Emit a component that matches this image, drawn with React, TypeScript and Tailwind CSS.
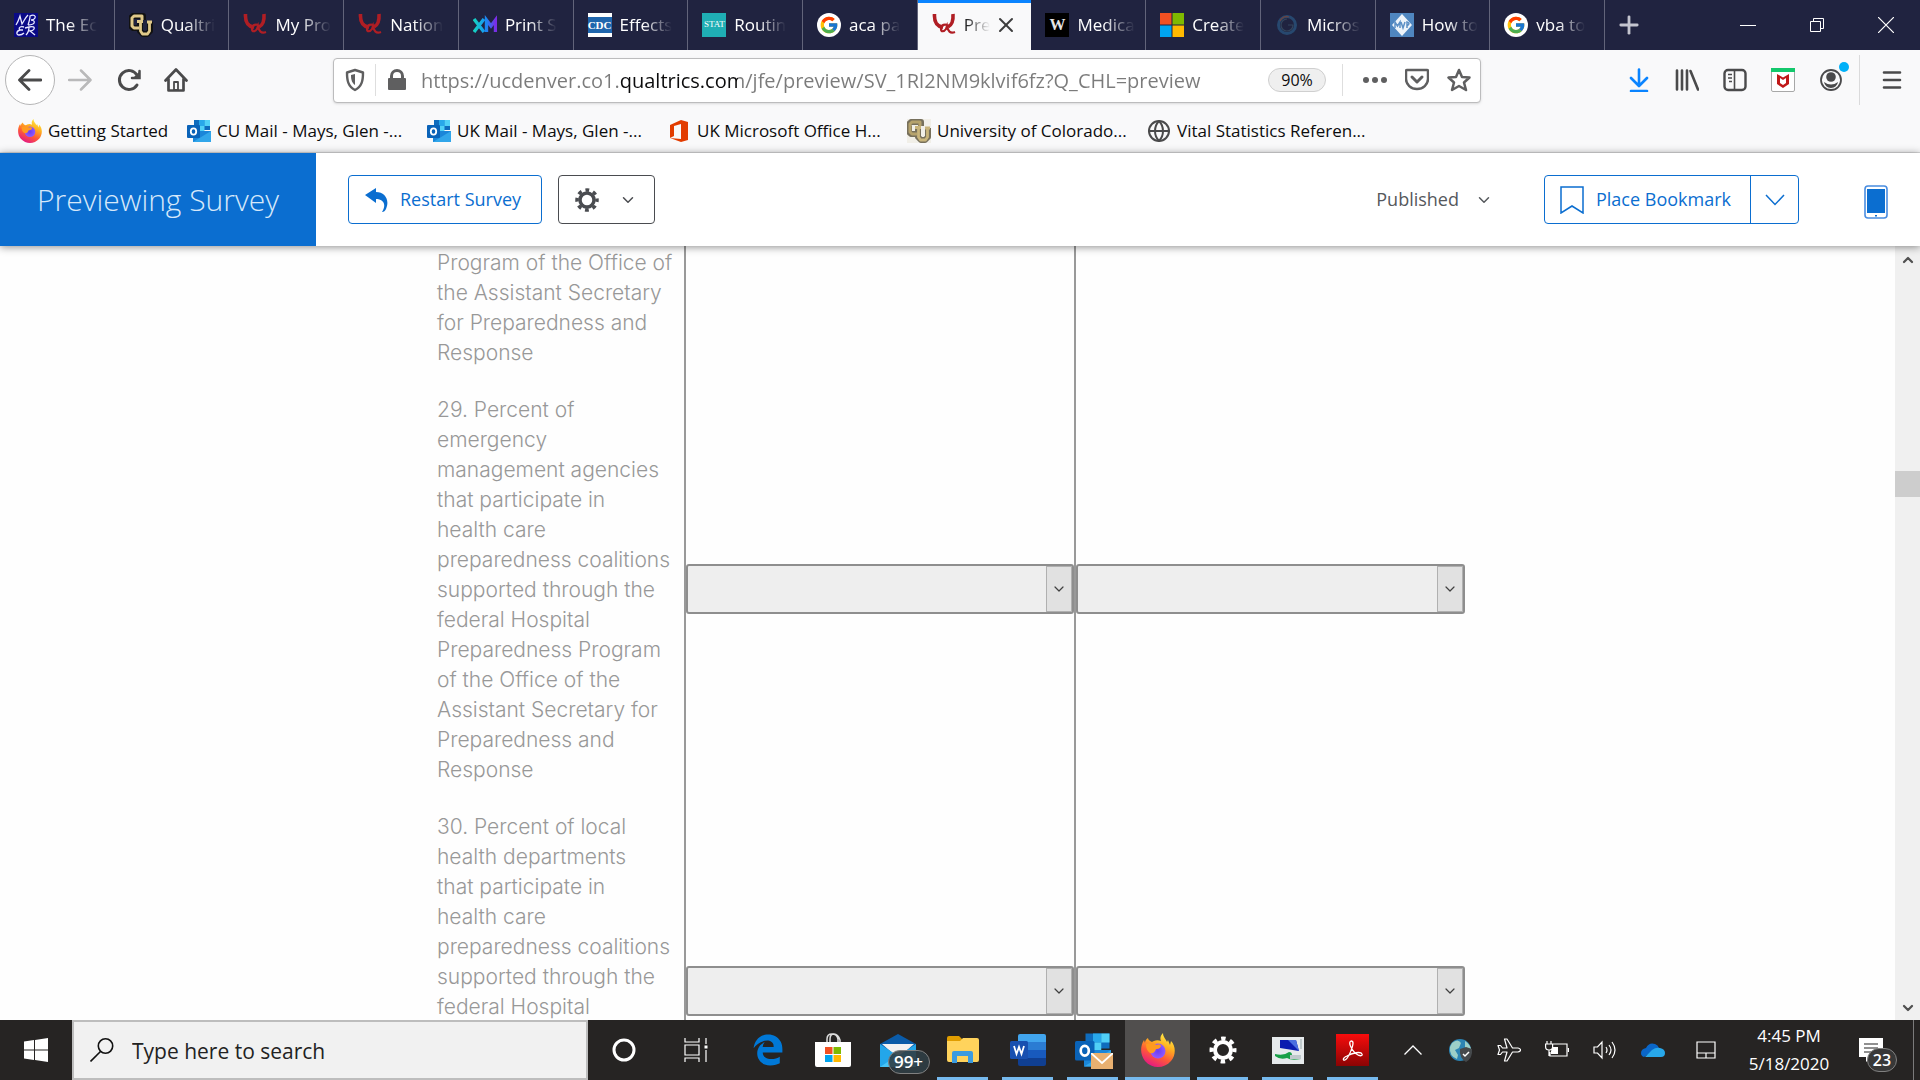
import type { ReactNode } from 'react'
import { ChevronDown, ChevronUp, Globe, Plus, X } from 'lucide-react'
import { FcGoogle } from 'react-icons/fc'
import { FaEdgeLegacy } from 'react-icons/fa6'

interface Tab {
    title: string
    icon: ReactNode
    active?: boolean
}

interface SurveyRow {
    id: number
    lines: string[]
}

/* ---------- Site icons ---------- */

function NberIcon() {
    return (
        <svg viewBox="0 0 24 24" className="size-6" fill="none" stroke="#e8e8ff" strokeWidth="1.3">
            <rect width="24" height="24" fill="#0a0a86" stroke="none" />
            <path d="M2 12C4 9 5 6 6 3l2 8c2-3 3-6 6-9M14 12c1-3 2-6 2-9 4-2 6 0 5 2s-3 2-4 2c4 0 4 3 2 4s-4 1-5 1" />
            <path d="M10 14c-4-1-6 1-4 3-4 1-4 5-1 5s4-1 5-2M6 17h3M12 22c2-2 3-5 3-8 4-1 6 0 5 2s-3 2-4 2l5 4M11 15l4-1" />
        </svg>
    )
}

function CuIcon({ muted = false }: { muted?: boolean }) {
    return (
        <svg viewBox="0 0 24 24" className="size-6 shrink-0" fill="none" strokeLinejoin="round">
            {muted && <rect width="24" height="24" fill="#f1efe8" />}
            <path d="M14 7V3H4L2 5v8l2 2h6M11 9v9l3 3h4l3-3V9" stroke={muted ? '#77705c' : '#111'} strokeWidth="6" />
            <path d="M13 7V3H5L3 5v8l2 2h5" stroke={muted ? '#b5a26c' : '#e0c98a'} strokeWidth="3" />
            <path d="M8 8.500h6M11.500 9v9l2 3h5l2-3V9M18 9h5" stroke={muted ? '#c9b57c' : '#e0c98a'} strokeWidth="2.800" />
        </svg>
    )
}

function QIcon() {
    return (
        <svg viewBox="0 0 24 24" className="size-6" fill="none" stroke="#b01e24">
            <path d="M2.500 1c-.5 8 2 12 8.500 13.500" strokeWidth="3.600" />
            <path d="M21 1c.5 7-1 11-5 13" strokeWidth="3.600" />
            <path d="M17 13c-4-3-8-1-8 3 0 3 3 3 5 0l1-3c1 5 3 8 8 6" strokeWidth="2.200" />
        </svg>
    )
}

function XmIcon() {
    return (
        <svg viewBox="0 0 24 24" className="size-6" fill="none" strokeWidth="3.4">
            <defs>
                <linearGradient id="xm-x" x1="0" x2="1">
                    <stop stopColor="#15d3c0" />
                    <stop offset="1" stopColor="#179cf0" />
                </linearGradient>
                <linearGradient id="xm-m" x1="0" x2="1">
                    <stop stopColor="#1b87f2" />
                    <stop offset="1" stopColor="#7a2ce6" />
                </linearGradient>
            </defs>
            <path d="m1 6 10 13M11 6 1 19" stroke="url(#xm-x)" />
            <path d="M13.500 19V7l4.500 6 4.500-6v12" stroke="url(#xm-m)" />
        </svg>
    )
}

function CdcIcon() {
    return (
        <span className="flex size-6 items-center bg-white">
            <span className="flex h-4 w-6 items-center justify-center bg-[#1f66ad] font-['Liberation_Serif',serif] text-[11px] font-bold text-white">
                CDC
            </span>
        </span>
    )
}

function StatIcon() {
    return (
        <span className="flex size-6 items-center justify-center bg-[#1faeb4] font-['Liberation_Serif',serif] text-[9px] text-white">
            STAT
        </span>
    )
}

function GoogleIcon() {
    return (
        <span className="flex size-6 items-center justify-center rounded-full bg-white">
            <FcGoogle className="size-5" />
        </span>
    )
}

function WikiIcon() {
    return (
        <span className="flex size-6 items-center justify-center bg-black font-['Liberation_Serif',serif] text-base font-bold text-[#e5e5e5]">
            W
        </span>
    )
}

function MicrosoftIcon() {
    return (
        <svg viewBox="0 0 24 24" className="size-6">
            <path d="M0 0h11.500v11.500H0z" fill="#f25022" />
            <path d="M12.500 0H24v11.500H12.500z" fill="#7fba00" />
            <path d="M0 12.500h11.500V24H0z" fill="#00a4ef" />
            <path d="M12.500 12.500H24V24H12.500z" fill="#ffb900" />
        </svg>
    )
}

function RingIcon() {
    return (
        <svg viewBox="0 0 24 24" className="size-6" fill="none">
            <circle cx="12" cy="12" r="8.500" stroke="#27486f" strokeWidth="3" />
            <path d="M12 6a6 6 0 1 0 6 6h-5" stroke="#33455c" strokeWidth="1.200" />
            <path d="M5 8a8 8 0 0 1 9-4" stroke="#6d4440" strokeWidth="1.200" />
        </svg>
    )
}

function MvpIcon() {
    return (
        <svg viewBox="0 0 24 24" className="size-6">
            <rect width="24" height="24" fill="#4f86c0" />
            <path d="m12 1 10 11-10 11L2 12z" fill="#eef4fa" />
            <path d="M5 15V9l2.500 4L10 9v6M11 9l2 6 2-6M17 15V9q4 1 0 4" fill="none" stroke="#5c8fc5" strokeWidth="1.500" />
        </svg>
    )
}

function FirefoxIcon({ className }: { className: string }) {
    return (
        <svg viewBox="0 0 34 34" className={className}>
            <defs>
                <linearGradient id="fx-body" x1="0.800" y1="0" x2="0.300" y2="1">
                    <stop stopColor="#fff44f" />
                    <stop offset="0.350" stopColor="#ffb01f" />
                    <stop offset="0.650" stopColor="#ff5b36" />
                    <stop offset="1" stopColor="#e31587" />
                </linearGradient>
                <radialGradient id="fx-globe">
                    <stop stopColor="#6b3df0" />
                    <stop offset="1" stopColor="#9059ff" />
                </radialGradient>
            </defs>
            <path
                d="M22 0c-3 3-3 6-2 8-4-2-8 0-9 1C8 8 7 6 7 5 5 6 4 8 4 10L3 7c-4 6-4 15 1 21 7 8 19 8 26 0 5-6 5-15 0-20l-1 4-2-5-1 2c-1-3-4-5-4-9Z"
                fill="url(#fx-body)"
            />
            <circle cx="17" cy="18" r="7.500" fill="url(#fx-globe)" />
            <path d="M5 11c5-1 9 0 11 1 2-1 4 0 4 1-1 3-4 3-5 3-1 3-3 5-6 4-3-2-4-5-4-9Z" fill="#ff9a20" />
        </svg>
    )
}

function OutlookIcon({ className }: { className: string }) {
    return (
        <svg viewBox="0 0 24 24" className={className}>
            <path d="M7 1h16v10H7z" fill="#0f6cbd" />
            <path d="M12 1h5.500v6H12z" fill="#28a8ea" />
            <path d="M17.500 1H23v6h-5.500zM12 7h5.500v6H12z" fill="#50d0f7" />
            <path d="M6 12h18v11H6z" fill="#1a86d9" />
            <path d="m6 23 18-11v11z" fill="#31a6ea" />
            <rect y="6" width="13" height="13" rx="1" fill="#0a63b8" />
            <ellipse cx="6.500" cy="12.500" rx="2.700" ry="3.200" fill="none" stroke="#fff" strokeWidth="1.800" />
        </svg>
    )
}

function OfficeIcon() {
    return (
        <svg viewBox="0 0 24 24" className="size-6 shrink-0">
            <path d="m3 6 11-5 7 2v18l-7 2-11-4 11 1V5L7 7v10l-4 2z" fill="#e23c00" />
        </svg>
    )
}

/* ---------- Browser chrome ---------- */

const TABS: Tab[] = [
    { title: 'The Ec', icon: <NberIcon /> },
    { title: 'Qualtri', icon: <CuIcon /> },
    { title: 'My Pro', icon: <QIcon /> },
    { title: 'Nation', icon: <QIcon /> },
    { title: 'Print S', icon: <XmIcon /> },
    { title: 'Effects', icon: <CdcIcon /> },
    { title: 'Routin', icon: <StatIcon /> },
    { title: 'aca pa', icon: <GoogleIcon /> },
    { title: 'Pre', icon: <QIcon />, active: true },
    { title: 'Medica', icon: <WikiIcon /> },
    { title: 'Create', icon: <MicrosoftIcon /> },
    { title: 'Micros', icon: <RingIcon /> },
    { title: 'How to', icon: <MvpIcon /> },
    { title: 'vba to', icon: <GoogleIcon /> },
]

function TabStrip() {
    return (
        <div className="flex h-[50px] shrink-0 bg-[#202340] text-white">
            <div role="tablist" className="flex min-w-0 flex-[0_1_1605px]">
                {TABS.map((tab) => (
                    <button
                        key={tab.title}
                        role="tab"
                        aria-selected={!!tab.active}
                        className={`flex min-w-0 flex-1 items-center gap-2 pl-3.5 ${
                            tab.active
                                ? 'border-t-[3px] border-[#0a84ff] bg-[#f9f9fa] pb-[3px] text-[#0c0c0d]'
                                : 'border-r border-[#62647a]'
                        }`}
                    >
                        <span className="shrink-0">{tab.icon}</span>
                        <span
                            className={`text-left text-[17px] whitespace-nowrap ${
                                tab.active
                                    ? '[mask-image:linear-gradient(to_right,black,transparent)]'
                                    : '[mask-image:linear-gradient(to_right,black_45%,transparent)]'
                            }`}
                        >
                            {tab.title}
                        </span>
                        {tab.active && <X className="-ml-1 size-6 shrink-0 text-[#3d3d3d]" strokeWidth={2} />}
                    </button>
                ))}
            </div>
            <button aria-label="New tab" className="flex w-12 items-center justify-center text-[#c4c5cf]">
                <Plus className="size-7" strokeWidth={2.4} />
            </button>
            <div className="ml-auto flex">
                <button aria-label="Minimize" className="flex w-[69px] items-center justify-center">
                    <span className="h-px w-4 bg-white" />
                </button>
                <button aria-label="Restore" className="flex w-[69px] items-center justify-center">
                    <svg viewBox="0 0 16 16" className="size-4" fill="none" stroke="#fff">
                        <path d="M1.500 4.500h10v10h-10zM4.500 4.500v-3h10v10h-3" />
                    </svg>
                </button>
                <button aria-label="Close window" className="flex w-[69px] items-center justify-center">
                    <svg viewBox="0 0 16 16" className="size-4" stroke="#fff" strokeWidth="1.200">
                        <path d="m0 0 16 16M16 0 0 16" />
                    </svg>
                </button>
            </div>
        </div>
    )
}

function Toolbar() {
    return (
        <div className="flex h-[60px] shrink-0 items-center text-[#4a4a4b]">
            <div className="flex w-[333px] shrink-0 items-center pl-[5px]">
                <button aria-label="Back" className="flex size-[50px] items-center justify-center rounded-full border border-[#b5b5b6] bg-white">
                    <svg viewBox="0 0 24 24" className="size-6" fill="none" stroke="currentColor" strokeWidth="2.800" strokeLinecap="round" strokeLinejoin="round">
                        <path d="M23 12H2M11 2.500 1.500 12l9.500 9.500" />
                    </svg>
                </button>
                <button aria-label="Forward" className="flex w-[50px] justify-center text-[#b9b9ba]">
                    <svg viewBox="0 0 24 24" className="size-6" fill="none" stroke="currentColor" strokeWidth="2.500" strokeLinecap="round" strokeLinejoin="round">
                        <path d="M1 12h21M13 2.500l9.500 9.500-9.500 9.500" />
                    </svg>
                </button>
                <button aria-label="Reload" className="flex w-12 justify-center">
                    <svg viewBox="0 0 24 24" className="size-6" fill="none" stroke="currentColor" strokeWidth="3" strokeLinecap="round">
                        <path d="M20 17A9.500 9.500 0 1 1 20 7" />
                        <path d="M22.500 3v7H15" strokeWidth="2.500" />
                        <path d="M22 4v6h-6z" fill="currentColor" stroke="none" />
                    </svg>
                </button>
                <button aria-label="Home" className="flex w-[46px] justify-center">
                    <svg viewBox="0 0 24 24" className="size-6" fill="none" stroke="currentColor" strokeWidth="2.700" strokeLinecap="round" strokeLinejoin="round">
                        <path d="m1.500 12.500 10.500-11 10.500 11M4.500 11v11.500h15V11" />
                        <path d="M10 14h4v8h-4z" strokeWidth="1.800" />
                    </svg>
                </button>
            </div>

            {/* Address bar */}
            <div className="flex h-[45px] min-w-0 flex-1 items-center rounded-sm border border-[#bcbcbd] bg-white shadow-sm">
                <svg viewBox="0 0 20 24" className="ml-[11px] h-6 w-5 shrink-0" fill="none" stroke="#5f5f60" strokeWidth="2.400">
                    <path d="M10 2 18 4.500c0 8-1 14-8 17.500C3 18.500 2 12.500 2 4.500z" strokeLinejoin="round" />
                    <path d="M10 6v11c-3-2-4-5-4-10z" fill="#5f5f60" stroke="none" />
                </svg>
                <span className="ml-2.5 h-8 w-px shrink-0 bg-[#dedede]" />
                <svg viewBox="0 0 20 22" className="ml-[11px] h-[22px] w-5 shrink-0" fill="#5f5f60">
                    <path d="M3 9V7a7 7 0 0 1 14 0v2h1q1 0 1 1v10q0 1-1 1H2q-1 0-1-1V10q0-1 1-1zm3 0h8V7a4 4 0 0 0-8 0z" />
                </svg>
                <input
                    aria-label="Address"
                    defaultValue="https://ucdenver.co1.qualtrics.com/jfe/preview/SV_1Rl2NM9klvif6fz?Q_CHL=preview"
                    className="ml-3.5 h-10 min-w-0 flex-1 bg-[linear-gradient(to_right,#7b7b7b_198px,#0c0c0d_198px,#0c0c0d_317px,#7b7b7b_317px)] bg-clip-text text-[20px] text-[#7b7b7b] outline-none [-webkit-text-fill-color:transparent]"
                />
                <button className="h-6 w-[58px] shrink-0 rounded-full border border-[#cfcfcf] bg-[#efefef] text-[16px] leading-5 text-[#0c0c0d]">
                    90%
                </button>
                <span className="ml-4 h-8 w-px shrink-0 bg-[#dedede]" />
                <button aria-label="Page actions" className="ml-5 shrink-0">
                    <svg viewBox="0 0 24 24" className="size-6" fill="#5f5f60">
                        <circle cx="3" cy="12" r="3" />
                        <circle cx="12" cy="12" r="3" />
                        <circle cx="21" cy="12" r="3" />
                    </svg>
                </button>
                <button aria-label="Save to Pocket" className="ml-[18px] shrink-0">
                    <svg viewBox="0 0 24 24" className="size-6" fill="none" stroke="#5f5f60" strokeWidth="2.500" strokeLinecap="round" strokeLinejoin="round">
                        <path d="M2 2h20q1 0 1 1v8a11 10 0 0 1-22 0V3q0-1 1-1z" />
                        <path d="m7 9 5 5 5-5" strokeWidth="3" />
                    </svg>
                </button>
                <button aria-label="Bookmark this page" className="mr-[9px] ml-[18px] shrink-0">
                    <svg viewBox="0 0 24 24" className="size-6" fill="none" stroke="#5f5f60" strokeWidth="2.500" strokeLinejoin="round">
                        <path d="m12 2 3 7 7.500.500-5.500 5 2 7.500-7-4-7 4 2-7.500-5.500-5L9 9z" />
                    </svg>
                </button>
            </div>

            {/* Extensions */}
            <div className="flex w-[439px] shrink-0 items-center justify-end">
                <button aria-label="Downloads" className="flex w-12 justify-center text-[#0a84ff]">
                    <svg viewBox="0 0 24 24" className="size-6" fill="none" stroke="currentColor" strokeWidth="2.600" strokeLinecap="round" strokeLinejoin="round">
                        <path d="M12 1.500V17M4 10l8 8 8-8M4 23h16" />
                    </svg>
                </button>
                <button aria-label="Library" className="flex w-12 justify-center">
                    <svg viewBox="0 0 24 24" className="size-6" fill="none" stroke="currentColor" strokeWidth="2.600" strokeLinecap="round">
                        <path d="M2 2.500v19M7 2.500v19M12 2.500v19M15.500 3 23 21.500" />
                    </svg>
                </button>
                <button aria-label="Sidebars" className="flex w-12 justify-center">
                    <svg viewBox="0 0 24 24" className="size-6" fill="none" stroke="currentColor" strokeWidth="2.400">
                        <rect x="1.500" y="2" width="21" height="20" rx="3.500" />
                        <path d="M11.500 2v20M5 6.500h4M5 10h4M6 13.500h3" strokeWidth="1.600" />
                    </svg>
                </button>
                <button aria-label="McAfee" className="flex w-12 justify-center">
                    <svg viewBox="0 0 24 24" className="size-6">
                        <rect x="0.500" y="0.500" width="23" height="23" rx="1.500" fill="#fff" stroke="#a8a8a8" />
                        <path d="M0 0h24v4H0z" fill="#14c86c" />
                        <path d="m6 6 6 3.500L18 6v10l-6 4-6-4zm3 4v5l3 2 3-2v-5l-3 2z" fill="#c01818" />
                    </svg>
                </button>
                <button aria-label="Firefox account" className="flex w-12 justify-center">
                    <span className="relative">
                        <svg viewBox="0 0 24 24" className="size-6">
                            <circle cx="12" cy="12" r="10" fill="none" stroke="currentColor" strokeWidth="1.800" />
                            <circle cx="12" cy="9" r="4.800" fill="currentColor" />
                            <path d="M5 14q7 5 14 0-1 5.500-7 6-6-.5-7-6z" fill="currentColor" />
                        </svg>
                        <span className="absolute -top-1.5 -right-1.5 size-2.5 rounded-full bg-[#00b0f8]" />
                    </span>
                </button>
                <span className="ml-1 h-[50px] w-px bg-[#dadadb]" />
                <button aria-label="Open menu" className="flex w-[60px] justify-center pl-1">
                    <svg viewBox="0 0 20 20" className="size-5" stroke="currentColor" strokeWidth="2.600" strokeLinecap="round">
                        <path d="M2 2.500h16M2 10h16M2 17.500h16" />
                    </svg>
                </button>
            </div>
        </div>
    )
}

const BOOKMARKS = [
    { label: 'Getting Started', icon: <FirefoxIcon className="size-6 shrink-0" />, width: 'w-[169px]' },
    { label: 'CU Mail - Mays, Glen -...', icon: <OutlookIcon className="size-6 shrink-0" />, width: 'w-[240px]' },
    { label: 'UK Mail - Mays, Glen -...', icon: <OutlookIcon className="size-6 shrink-0" />, width: 'w-[240px]' },
    { label: 'UK Microsoft Office H...', icon: <OfficeIcon />, width: 'w-[240px]' },
    { label: 'University of Colorado...', icon: <CuIcon muted />, width: 'w-[240px]' },
    { label: 'Vital Statistics Referen...', icon: <Globe className="size-6 shrink-0 text-[#4a4a4b]" strokeWidth={2} />, width: 'w-[240px]' },
]

function BookmarksBar() {
    return (
        <nav className="flex h-[43px] shrink-0 items-center border-b border-[#dcdcdd] pl-[18px] text-[17px] text-[#0c0c0d]">
            {BOOKMARKS.map((b) => (
                <a key={b.label} href="#" className={`flex items-center gap-1.5 whitespace-nowrap ${b.width}`}>
                    {b.icon}
                    {b.label}
                </a>
            ))}
        </nav>
    )
}

/* ---------- Survey preview ---------- */

function PreviewHeader() {
    return (
        <header className="relative z-10 flex h-[93px] shrink-0 items-center bg-white text-[18px] shadow-[0_1px_8px_rgba(0,0,0,0.45)]">
            <h1 className="flex h-full w-[316px] items-center justify-center bg-[#0b6ed0] text-[30px] font-light text-[#d6e8fa]">
                Previewing Survey
            </h1>
            <button className="ml-8 flex h-[49px] w-[194px] items-center rounded border border-[#0b6ed0] pl-4 text-[#0b6ed0]">
                <svg viewBox="0 0 24 24" className="mr-[11px] size-6" fill="#0b6ed0">
                    <path d="M0 7 11 0v4c9 0 14 8 10 17-1 2-2 3-4 3 5-8 1-13-6-13v4z" />
                </svg>
                Restart Survey
            </button>
            <button aria-label="Preview options" className="ml-4 flex h-[49px] w-[97px] items-center rounded border border-[#4a4c50] pl-4 text-[#4a4c50]">
                <svg viewBox="0 0 24 24" className="size-6" fill="none" stroke="currentColor">
                    <circle cx="12" cy="12" r="7" strokeWidth="3.500" />
                    <circle cx="12" cy="12" r="10" strokeWidth="3.500" strokeDasharray="3.800 4.054" strokeDashoffset="1.900" />
                </svg>
                <ChevronDown className="ml-5 size-[18px]" strokeWidth={2} />
            </button>

            <button className="ml-auto flex items-center gap-4 text-[#55585c]">
                Published
                <ChevronDown className="size-[18px]" strokeWidth={2} />
            </button>
            <div className="ml-[51px] flex h-[49px] w-[255px] rounded border border-[#0b6ed0] text-[#0b6ed0]">
                <button className="flex flex-1 items-center pl-[15px]">
                    <svg viewBox="0 0 24 28" className="mr-3 h-7 w-6" fill="none" stroke="currentColor" strokeWidth="1.500">
                        <path d="M1 1h22v26l-11-7-11 7z" />
                    </svg>
                    Place Bookmark
                </button>
                <button aria-label="Bookmark options" className="flex w-12 items-center justify-center border-l border-[#0b6ed0]">
                    <svg viewBox="0 0 20 12" className="h-3 w-5" fill="none" stroke="currentColor" strokeWidth="1.500">
                        <path d="m1 1 9 9.500L19 1" />
                    </svg>
                </button>
            </div>
            <button aria-label="Mobile view" className="mr-8 ml-[65px] pt-1">
                <svg viewBox="0 0 24 34" className="h-[34px] w-6">
                    <rect x="1" y="1" width="22" height="32" rx="3" fill="#fff" stroke="#4a8de0" strokeWidth="1.600" />
                    <path d="M3 4h18v24H3z" fill="#0b6ed0" />
                    <path d="M11 30h2v1.500h-2z" fill="#0b6ed0" />
                </svg>
            </button>
        </header>
    )
}

const ROWS: SurveyRow[] = [
    {
        id: 28,
        lines: ['Program of the Office of', 'the Assistant Secretary', 'for Preparedness and', 'Response'],
    },
    {
        id: 29,
        lines: [
            '29. Percent of',
            'emergency',
            'management agencies',
            'that participate in',
            'health care',
            'preparedness coalitions',
            'supported through the',
            'federal Hospital',
            'Preparedness Program',
            'of the Office of the',
            'Assistant Secretary for',
            'Preparedness and',
            'Response',
        ],
    },
    {
        id: 30,
        lines: [
            '30. Percent of local',
            'health departments',
            'that participate in',
            'health care',
            'preparedness coalitions',
            'supported through the',
            'federal Hospital',
            'Preparedness Program',
            'of the Office of the',
            'Assistant Secretary for',
            'Preparedness and',
            'Response',
        ],
    },
]

function AnswerSelect({ label }: { label: string }) {
    return (
        <div className="relative">
            <select
                aria-label={label}
                className="block h-[50px] w-full appearance-none rounded-[3px] border-2 border-[#8e8e8e] bg-[#eeeeee]"
            >
                <option></option>
            </select>
            <span className="pointer-events-none absolute inset-y-0.5 right-0.5 flex w-[26px] items-center justify-center border border-[#b0b0b0] bg-[#e1e1e1] text-[#404040]">
                <ChevronDown className="size-4" strokeWidth={1.8} />
            </span>
        </div>
    )
}

function Survey() {
    return (
        <main className="flex min-h-0 flex-1 overflow-hidden bg-[#fefefe]">
            <div className="min-w-0 flex-1">
                <table className="mx-auto w-full max-w-[1035px] table-fixed border-collapse">
                    <tbody>
                        {ROWS.map((row) => (
                            <tr key={row.id}>
                                <th
                                    scope="row"
                                    className={`w-[255px] pb-[13px] pl-[7px] text-left font-['Inter',sans-serif] text-[21px] leading-[30px] font-light whitespace-nowrap text-[#989898] ${
                                        row.id === 28 ? 'pt-0.5' : 'pt-3.5'
                                    }`}
                                >
                                    {row.lines.map((line) => (
                                        <span key={line} className="block">
                                            {line}
                                        </span>
                                    ))}
                                </th>
                                {['First response', 'Second response'].map((label) => (
                                    <td key={label} className="border-l-2 border-[#999999] pb-0.5 align-middle">
                                        {row.id !== 28 && <AnswerSelect label={`${label}, item ${row.id}`} />}
                                    </td>
                                ))}
                            </tr>
                        ))}
                    </tbody>
                </table>
            </div>

            {/* Scrollbar */}
            <div className="flex w-[25px] shrink-0 flex-col items-center bg-[#f0f0f0] py-1 text-[#505050]">
                <ChevronUp className="mt-0.5 size-4" strokeWidth={3.4} />
                <div className="w-full basis-[203px]" />
                <div className="h-[26px] w-full bg-[#cdcdcd]" />
                <ChevronDown className="mt-auto size-4" strokeWidth={3.4} />
            </div>
        </main>
    )
}

/* ---------- Taskbar ---------- */

function StoreIcon() {
    return (
        <svg viewBox="0 0 36 36" className="size-9">
            <path d="M12 10V7q0-5 5-5t6 5v3M15 10V7q0-5 4-5t6 6v2" fill="none" stroke="#ddd" strokeWidth="1.500" />
            <path d="M0 10h36v23q0 2-2 2H2q-2 0-2-2z" fill="#fff" />
            <path d="M10 15h7.500v7H10z" fill="#f25022" />
            <path d="M18.500 15H26v7h-7.500z" fill="#7fba00" />
            <path d="M10 23h7.500v7H10z" fill="#00a4ef" />
            <path d="M18.500 23H26v7h-7.500z" fill="#ffb900" />
        </svg>
    )
}

function MailIcon() {
    return (
        <span className="relative">
            <svg viewBox="0 0 36 36" className="size-9">
                <path d="M0 12 18 2l18 10v6H0z" fill="#0a5ba8" />
                <path d="M2 12h32L18 26z" fill="#f2f2f2" />
                <path d="M0 12 18 24l18-12v23H0z" fill="#23a6ea" />
                <path d="M4 12h28L18 21z" fill="#f2f2f2" />
                <path d="M0 35 18 23l18 12z" fill="#47c3f5" />
            </svg>
            <span className="absolute top-[18px] left-2 flex h-6 w-[42px] items-center justify-center rounded-full border border-[#808080] bg-[#303e45]/90 text-[17px] font-semibold text-white">
                99+
            </span>
        </span>
    )
}

function FolderIcon() {
    return (
        <svg viewBox="0 0 32 28" className="h-7 w-8">
            <path d="M0 2q0-2 2-2h10l3 3v3H0z" fill="#e09d00" />
            <path d="M0 5h13l3-3h14q2 0 2 2v20q0 2-2 2H2q-2 0-2-2z" fill="#ffd35c" />
            <path d="M5 27V17q0-2 2-2h17q2 0 2 2v10h-5v-7H10v7z" fill="#3b9be0" />
        </svg>
    )
}

function WordIcon() {
    return (
        <svg viewBox="0 0 36 32" className="h-8 w-9" fill="none">
            <path d="M10 0h24q2 0 2 2v6H8V2q0-2 2-2z" fill="#41a5ee" />
            <path d="M8 8h28v8H8z" fill="#2b7cd3" />
            <path d="M8 16h28v8H8z" fill="#185abd" />
            <path d="M8 24h28v6q0 2-2 2H10q-2 0-2-2z" fill="#103f91" />
            <rect y="7" width="18" height="18" rx="1.500" fill="#1850b0" />
            <path d="m4 12 2.500 8L9 13l2.500 7 2.500-8" stroke="#fff" strokeWidth="1.800" />
        </svg>
    )
}

function TaskOutlookIcon() {
    return (
        <span className="relative">
            <OutlookIcon className="size-9" />
            <svg viewBox="0 0 22 16" className="absolute top-[21px] left-4 h-4 w-[22px]">
                <path d="M0 0h22v16H0z" fill="#e8b070" />
                <path d="m0 0 11 10L22 0" fill="none" stroke="#fff" strokeWidth="1.800" />
            </svg>
        </span>
    )
}

function RemoteIcon() {
    return (
        <svg viewBox="0 0 32 27" className="h-[27px] w-8">
            <path d="M0 0h32v27H0z" fill="#e6eaec" />
            <path d="M8 3h16l3 11-19-3z" fill="#0b1cb0" />
            <path d="m16 3 8 0 3 11z" fill="#4a6ee0" />
            <path d="M3 17q9 2 14-2 3 0 3 3l9 1v3q-10 2-14-1-7 2-12-2z" fill="#18a048" />
            <path d="M18 18h11v4H18zM28 2h2v10h-2z" fill="#bfc9cc" />
        </svg>
    )
}

function AcrobatIcon() {
    return (
        <svg viewBox="0 0 33 32" className="h-8 w-[33px]">
            <defs>
                <linearGradient id="acrobat" x1="0" y1="0" x2="0" y2="1">
                    <stop stopColor="#f80c0c" />
                    <stop offset="1" stopColor="#8a0404" />
                </linearGradient>
            </defs>
            <path d="M0 0h33v32H0z" fill="url(#acrobat)" />
            <path
                d="M15 7c-3 1 0 8 4 12 5 4 8 3 7 1-1-3-10-1-15 2-5 2-4 5-2 4 4-2 8-14 8-17 0-1-1-2-2-2z"
                fill="none"
                stroke="#fff"
                strokeWidth="1.300"
            />
        </svg>
    )
}

const APPS = [
    {
        name: 'Cortana',
        icon: (
            <svg viewBox="0 0 24 24" className="size-6" fill="none" stroke="#fff" strokeWidth="3">
                <circle cx="12" cy="12" r="10" />
            </svg>
        ),
    },
    {
        name: 'Task View',
        icon: (
            <svg viewBox="0 0 24 24" className="size-6" fill="none" stroke="#fff" strokeWidth="1.200">
                <path d="M1 0v4h14V0M1 7h14v10H1zM1 24v-4h14v4M22 0v6M22 12v12" />
                <path d="M20.500 7.500h3v3h-3z" fill="#fff" stroke="none" />
            </svg>
        ),
        wide: true,
    },
    { name: 'Edge', icon: <FaEdgeLegacy className="size-8 text-[#0078d7]" /> },
    { name: 'Store', icon: <StoreIcon /> },
    { name: 'Mail', icon: <MailIcon /> },
    { name: 'File Explorer', icon: <FolderIcon />, open: true },
    { name: 'Word', icon: <WordIcon />, open: true },
    { name: 'Outlook', icon: <TaskOutlookIcon />, open: true },
    { name: 'Firefox', icon: <FirefoxIcon className="size-[34px]" />, open: true, focused: true },
    {
        name: 'Settings',
        icon: (
            <svg viewBox="0 0 28 28" className="size-7" fill="none" stroke="#fff">
                <circle cx="14" cy="14" r="8" strokeWidth="4" />
                <circle cx="14" cy="14" r="11.500" strokeWidth="4" strokeDasharray="4.500 4.532" strokeDashoffset="2.250" />
            </svg>
        ),
        open: true,
    },
    { name: 'Remote Desktop', icon: <RemoteIcon />, open: true },
    { name: 'Acrobat', icon: <AcrobatIcon />, open: true },
]

function Tray() {
    return (
        <div className="ml-auto flex shrink-0 items-center text-white">
            <button aria-label="Show hidden icons" className="flex w-12 justify-center">
                <svg viewBox="0 0 18 10" className="h-2.5 w-[18px]" fill="none" stroke="#fff" strokeWidth="1.300">
                    <path d="m0.500 9.500 8.500-8.500 8.500 8.500" />
                </svg>
            </button>
            <button aria-label="VPN" className="flex w-12 justify-center">
                <svg viewBox="0 0 24 24" className="size-6">
                    <circle cx="11" cy="12" r="11" fill="#2c84b4" />
                    <path d="M3 5q6-5 9 0l-2 5-4 2 3 5-1 4Q0 18 1 9zM16 3q6 4 6 9l-6-2z" fill="#9ccfc8" />
                    <path d="m17 9 6 2q1 9-6 13-7-4-6-13z" fill="#45494c" />
                    <path d="m14 16 2 2 4-4" fill="none" stroke="#fff" strokeWidth="1.500" />
                </svg>
            </button>
            <button aria-label="Airplane mode" className="flex w-12 justify-center">
                <svg viewBox="0 0 24 24" className="size-6" fill="none" stroke="#fff" strokeWidth="1.200" strokeLinejoin="round">
                    <path d="M1 7.500h2.500l2 2.500H10L7.500 1H10l5.500 9H21q2.500.5 2.500 2T21 14h-5.500L10 23H7.500L10 14H5.500l-2 2.500H1L2.500 12z" />
                </svg>
            </button>
            <button aria-label="Battery" className="flex w-12 justify-center">
                <svg viewBox="0 0 24 24" className="size-6" fill="none" stroke="#fff" strokeWidth="1.200">
                    <path d="M8 6h14v12H5v-4M23.500 10v4M2 3v3M6 3v3M0.600 6h7v3q0 3-3.500 3t-3.500-3zM4 12v6" />
                    <path d="M8 9h5v7H6v-3z" fill="#fff" stroke="none" />
                </svg>
            </button>
            <button aria-label="Volume" className="flex w-12 justify-center">
                <svg viewBox="0 0 24 24" className="size-6" fill="none" stroke="#fff" strokeWidth="1.200">
                    <path d="M1 9h3.500L9 4v16l-4.500-5H1zM13 9q2 3 0 6M16 7q4 5 0 10M19 4q6 8 0 16" />
                </svg>
            </button>
            <button aria-label="OneDrive" className="flex w-12 justify-center">
                <svg viewBox="0 0 24 24" className="size-6">
                    <path d="M5 10q3-6 9-4 3 1 4 4l-7 4-8 5q-3-1-3-4 0-4 5-5z" fill="#0a66c8" />
                    <path d="M11 12q4-3 8-2 5 1 5 5 0 4-4 4H4z" fill="#28a8ea" />
                </svg>
            </button>
            <button aria-label="Touchpad" className="flex w-[58px] justify-center">
                <svg viewBox="0 0 20 18" className="h-[18px] w-5" fill="none" stroke="#fff" strokeWidth="1.200">
                    <path d="M1 1h18v16H1zM1 12h18M10 12v5" />
                </svg>
            </button>
            <time className="flex w-[108px] flex-col text-center text-[17px] leading-7">
                <span>4:45 PM</span>
                <span>5/18/2020</span>
            </time>
            <button aria-label="Notifications" className="flex w-[70px] justify-center pr-3.5">
                <span className="relative">
                    <svg viewBox="0 0 24 24" className="size-6">
                        <path d="M0 0h24v19H12l-5 5v-5H0z" fill="#fff" />
                        <path d="M5 6h14M5 10h14M5 14h14" stroke="#222" strokeWidth="1.200" />
                    </svg>
                    <span className="absolute top-2.5 left-2 flex h-6 w-[30px] items-center justify-center rounded-full border border-[#808080] bg-[#383838] text-[16px] font-semibold">
                        23
                    </span>
                </span>
            </button>
            <span className="mr-1.5 h-[60px] w-px bg-[#7b7b7b]" />
        </div>
    )
}

function Taskbar() {
    return (
        <footer className="flex h-[60px] shrink-0 bg-[#262423]">
            <button aria-label="Start" className="flex w-[72px] shrink-0 items-center justify-center">
                <svg viewBox="0 0 24 24" className="size-6" fill="#fff">
                    <path d="m0 3.500 10-1.400v9.400H0zM11 2l13-2v11.500H11zM0 12.500h10v9.400L0 20.500zM11 12.500h13V24l-13-2z" />
                </svg>
            </button>
            <label className="flex w-[516px] min-w-0 items-center border-2 border-[#bdbdbd] bg-[#f1f1f1] pl-4">
                <svg viewBox="0 0 24 24" className="size-6 shrink-0" fill="none" stroke="#111" strokeWidth="1.600">
                    <circle cx="15.500" cy="8" r="7.200" />
                    <path d="M10.500 13.500.500 23.500" />
                </svg>
                <input
                    aria-label="Search"
                    placeholder="Type here to search"
                    className="ml-[18px] h-full min-w-0 flex-1 bg-transparent pt-0.5 text-[21px] outline-none placeholder:text-[#222222]"
                />
            </label>
            <div className="ml-[3px] flex min-w-0">
                {APPS.map((app) => (
                    <button
                        key={app.name}
                        aria-label={app.name}
                        className={`flex flex-col items-center ${app.wide ? 'w-[79px]' : 'w-[65px]'} ${
                            app.focused ? 'bg-[#514f4e]' : ''
                        }`}
                    >
                        <span className="flex flex-1 items-center">{app.icon}</span>
                        {app.open && (
                            <span className={`-mt-[3px] h-[3px] bg-[#76b9ed] ${app.focused ? 'w-full' : 'w-[51px]'}`} />
                        )}
                    </button>
                ))}
            </div>
            <Tray />
        </footer>
    )
}

export default function App() {
    return (
        <div className="flex h-screen flex-col overflow-hidden bg-[#f9f9fa] font-['Open_Sans','Noto_Sans',sans-serif]">
            <TabStrip />
            <Toolbar />
            <BookmarksBar />
            <PreviewHeader />
            <Survey />
            <Taskbar />
        </div>
    )
}
